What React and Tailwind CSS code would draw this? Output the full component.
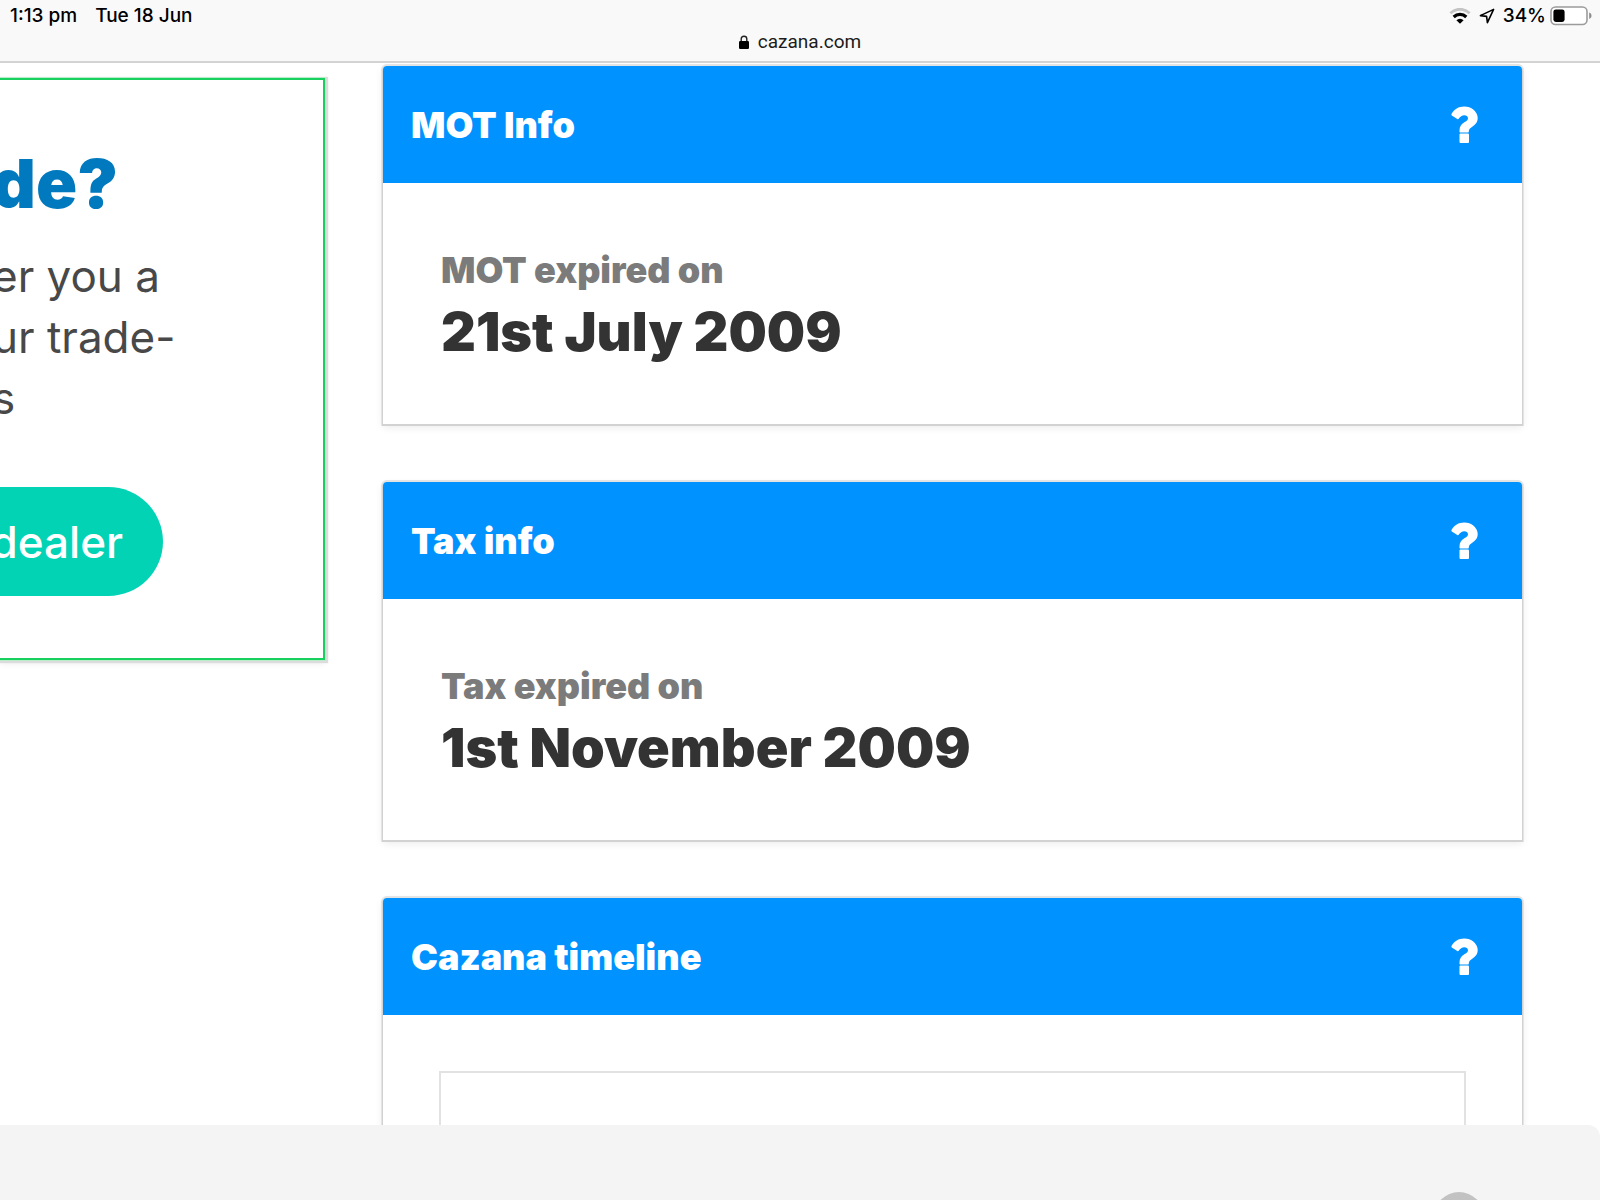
function WifiIcon() {
  return (
    <svg width="22" height="16" viewBox="0 0 22 16" fill="none" aria-hidden="true">
      <path d="M1.4 5.2a13.6 13.6 0 0 1 19.2 0" stroke="#c4c4c4" strokeWidth="2.8" />
      <path d="M4.7 9a9 9 0 0 1 12.6 0" stroke="#000" strokeWidth="3.2" />
      <path d="M11 15.8 7.4 12.3a5 5 0 0 1 7.2 0z" fill="#000" />
    </svg>
  );
}

function LocationIcon() {
  return (
    <svg width="16" height="16" viewBox="0 0 16 16" fill="none" aria-hidden="true">
      <path d="M14.6 1.4 1.4 7.6l6.2.8.8 6.2z" stroke="#000" strokeWidth="1.6" strokeLinejoin="round" />
    </svg>
  );
}

function BatteryIcon() {
  return (
    <svg width="42" height="20" viewBox="0 0 42 20" aria-hidden="true">
      <rect x="1" y="1" width="36" height="17.5" rx="4.5" fill="#fff" stroke="#9b9b9b" strokeWidth="1.6" />
      <rect x="3.4" y="3.4" width="11.2" height="12.6" rx="2.4" fill="#000" />
      <path d="M39.2 6.6c1.6.7 2.3 1.8 2.3 3.1s-.7 2.5-2.3 3.2z" fill="#8c8c8c" />
    </svg>
  );
}

function LockIcon() {
  return (
    <svg width="10" height="14" viewBox="0 0 10 14" aria-hidden="true">
      <path d="M2.2 7V4a2.8 2.8 0 0 1 5.6 0v3" fill="none" stroke="#222" strokeWidth="1.4" />
      <rect x="0" y="6" width="10" height="8" rx="1.2" fill="#000" />
    </svg>
  );
}

function QuestionIcon() {
  return (
    <svg width="27" height="38" viewBox="0 0 27 38" fill="#fff" aria-hidden="true">
      <path d="M.5 8C3.3 3.2 7.5.5 13.200.5c7 0 13.500 4.700 13.500 11.600 0 4.400-2.500 6.700-5.700 8.900-2.300 1.600-3.200 2.500-3.200 4.400 0 .6-.4 1-1 1H9.500c-.6 0-1-.4-1-1v-1c0-4 2.200-6.400 5.200-8.300 2.300-1.500 3.300-2.300 3.300-3.900 0-1.800-1.600-2.900-3.700-2.900-2.400 0-3.900 1.200-5.600 3.400-.4.500-.9.600-1.400.2L.8 9.400C.3 9 .2 8.500.5 8z" />
      <rect x="8.500" y="27.500" width="9.500" height="9.500" rx="1" />
    </svg>
  );
}

function InfoCard({ title, children }) {
  return (
    <section className="rounded-t bg-white shadow-[0_1px_0_1px_#d2d2d2,0_0_0_2px_#e4e4e4,0_3px_8px_#00000018]">
      <header className="flex h-[117px] items-center justify-between rounded-t bg-[#0093ff] pr-11 pl-7">
        <h2 className="text-4xl font-black text-white">{title}</h2>
        <button type="button" aria-label={`About ${title}`}>
          <QuestionIcon />
        </button>
      </header>
      {children}
    </section>
  );
}

function Expiry({ label, date }) {
  return (
    <div className="px-[58px] pt-16 pb-[54px]">
      <p className="text-4xl leading-[46px] font-black text-[#7b7b7b]">{label}</p>
      <p className="text-[54px] leading-[77px] font-black text-[#333]">{date}</p>
    </div>
  );
}

export default function App() {
  return (
    <div className="flex h-screen flex-col overflow-hidden bg-white font-['Inter',sans-serif]">
      {/* Status and address bar */}
      <div className="h-[63px] shrink-0 border-b-2 border-[#d3d3d3] bg-[#f9f9f9] text-black">
        <div className="flex h-8 items-center justify-between pr-2 pl-[10px] text-[19px] font-medium">
          <div className="flex gap-[18px]">
            <span>1:13 pm</span>
            <span>Tue 18 Jun</span>
          </div>
          <div className="flex items-center">
            <WifiIcon />
            <span className="ml-2 flex">
              <LocationIcon />
            </span>
            <span className="mr-1 ml-2">34%</span>
            <BatteryIcon />
          </div>
        </div>
        <a href="#" className="flex h-5 items-center justify-center gap-[9px] font-['Roboto',sans-serif] text-[19px] text-[#1c1c1c]">
          <LockIcon />
          cazana.com
        </a>
      </div>

      <main className="flex min-h-0 flex-1 items-start overflow-hidden">
        {/* Dealer offer */}
        <aside className="mt-[15px] w-[325px] shrink-0 overflow-hidden border-2 border-l-0 border-[#17d05e] pt-[63px] pb-[62px] shadow-[0_0_0_1px_#b9ecca,1px_1px_1px_2px_#dcdcdc,0_4px_6px_#00000010]">
          <div className="-ml-2">
            <h1 className="text-[68px] leading-20 font-black text-[#0079be]">de?</h1>
            <p className="mt-[23px] text-[44px] leading-[61px] text-[#484848]">
              er you a
              <br />
              ur trade-
              <br />s
            </p>
          </div>
          <button
            type="button"
            className="mt-[58px] flex h-[109px] w-[163px] items-center justify-end rounded-r-full bg-[#03d3b5] pr-10 text-[44px] font-medium text-white"
          >
            dealer
          </button>
        </aside>

        <div className="mr-[78px] ml-[58px] flex flex-1 flex-col gap-[58px] pt-[3px]">
          <InfoCard title="MOT Info">
            <Expiry label="MOT expired on" date="21st July 2009" />
          </InfoCard>
          <InfoCard title="Tax info">
            <Expiry label="Tax expired on" date="1st November 2009" />
          </InfoCard>
          <InfoCard title="Cazana timeline">
            <div className="p-14">
              <div className="h-80 border-2 border-[#e2e2e2]" />
            </div>
          </InfoCard>
        </div>
      </main>

      <footer className="flex h-[75px] shrink-0 items-start justify-end overflow-hidden rounded-tr-xl bg-[#f4f4f4] pt-[67px] pr-[116px]">
        <button type="button" aria-label="Close" className="size-[50px] shrink-0 rounded-full bg-[#c2c2c2]" />
      </footer>
    </div>
  );
}
